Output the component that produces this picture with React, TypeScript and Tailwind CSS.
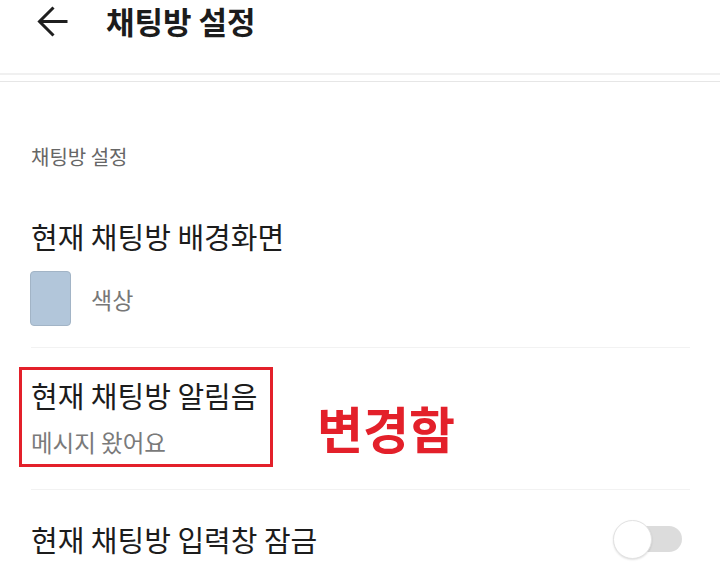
import React from "react";

const font = { fontFamily: '"Noto Sans CJK KR", "Noto Sans", sans-serif' };

export default function App() {
  return (
    <div
      className="relative w-[720px] h-[568px] overflow-hidden bg-white text-[#1c1c1c]"
      style={font}
    >
      {/* header */}
      <div className="h-[42px] flex items-center pl-[37px]">
        <svg width="32" height="31" viewBox="0 0 32 31" fill="none">
          <path
            d="M30.5 15.5H2.5M16.5 1.5L2.5 15.5L16.5 29.5"
            stroke="#1f1f1f"
            strokeWidth="3"
            strokeLinecap="butt"
            strokeLinejoin="miter"
          />
        </svg>
        <div className="ml-[37px] text-[31px] leading-[42px] font-bold">
          채팅방 설정
        </div>
      </div>
      <div className="h-[31px]" />
      <div className="h-[2px] bg-[#f0f0f0]" />
      <div className="h-[6px]" />
      <div className="h-px bg-[#e6e6e6]" />

      <div className="pl-[31px] pr-[30px]">
        <div className="mt-[63px] text-[20px] leading-[24px] text-[#666666]">
          채팅방 설정
        </div>

        <div className="mt-[50px] text-[29px] leading-[34px]">
          현재 채팅방 배경화면
        </div>
        <div className="mt-[18px] flex items-center">
          <div className="-ml-px w-[41px] h-[55px] rounded-[4px] bg-[#b2c6da] border border-[#a2b4c6]" />
          <div className="ml-[20px] text-[23px] leading-[28px] text-[#777777]">
            색상
          </div>
        </div>

        <div className="mt-[21px] h-px bg-[#f2f2f2]" />

        <div className="mt-[30px] text-[29px] leading-[34px]">
          현재 채팅방 알림음
        </div>
        <div className="mt-[16px] text-[23.5px] leading-[28px] text-[#7a7a7a]">
          메시지 왔어요
        </div>

        <div className="mt-[33px] h-px bg-[#f2f2f2]" />

        <div className="mt-[29px] h-[40px] flex items-center justify-between">
          <div className="text-[29px] leading-[34px]">현재 채팅방 입력창 잠금</div>
          <div className="relative mr-[8px] w-[69px] h-[40px] flex items-center">
            <div className="absolute right-0 w-[62px] h-[26px] rounded-full bg-[#dcdcdc]" />
            <div className="absolute left-0 w-[39px] h-[39px] rounded-full bg-white border border-[#e2e2e2] shadow-[0_1px_2px_rgba(0,0,0,0.12)]" />
          </div>
        </div>
      </div>

      {/* annotation */}
      <div className="absolute left-[19px] top-[367px] w-[254px] h-[100px] border-[3px] border-[#e3202a]" />
      <div className="absolute left-[317px] top-[396px] text-[50px] leading-[62px] font-bold text-[#e3202a]">
        변경함
      </div>
    </div>
  );
}
